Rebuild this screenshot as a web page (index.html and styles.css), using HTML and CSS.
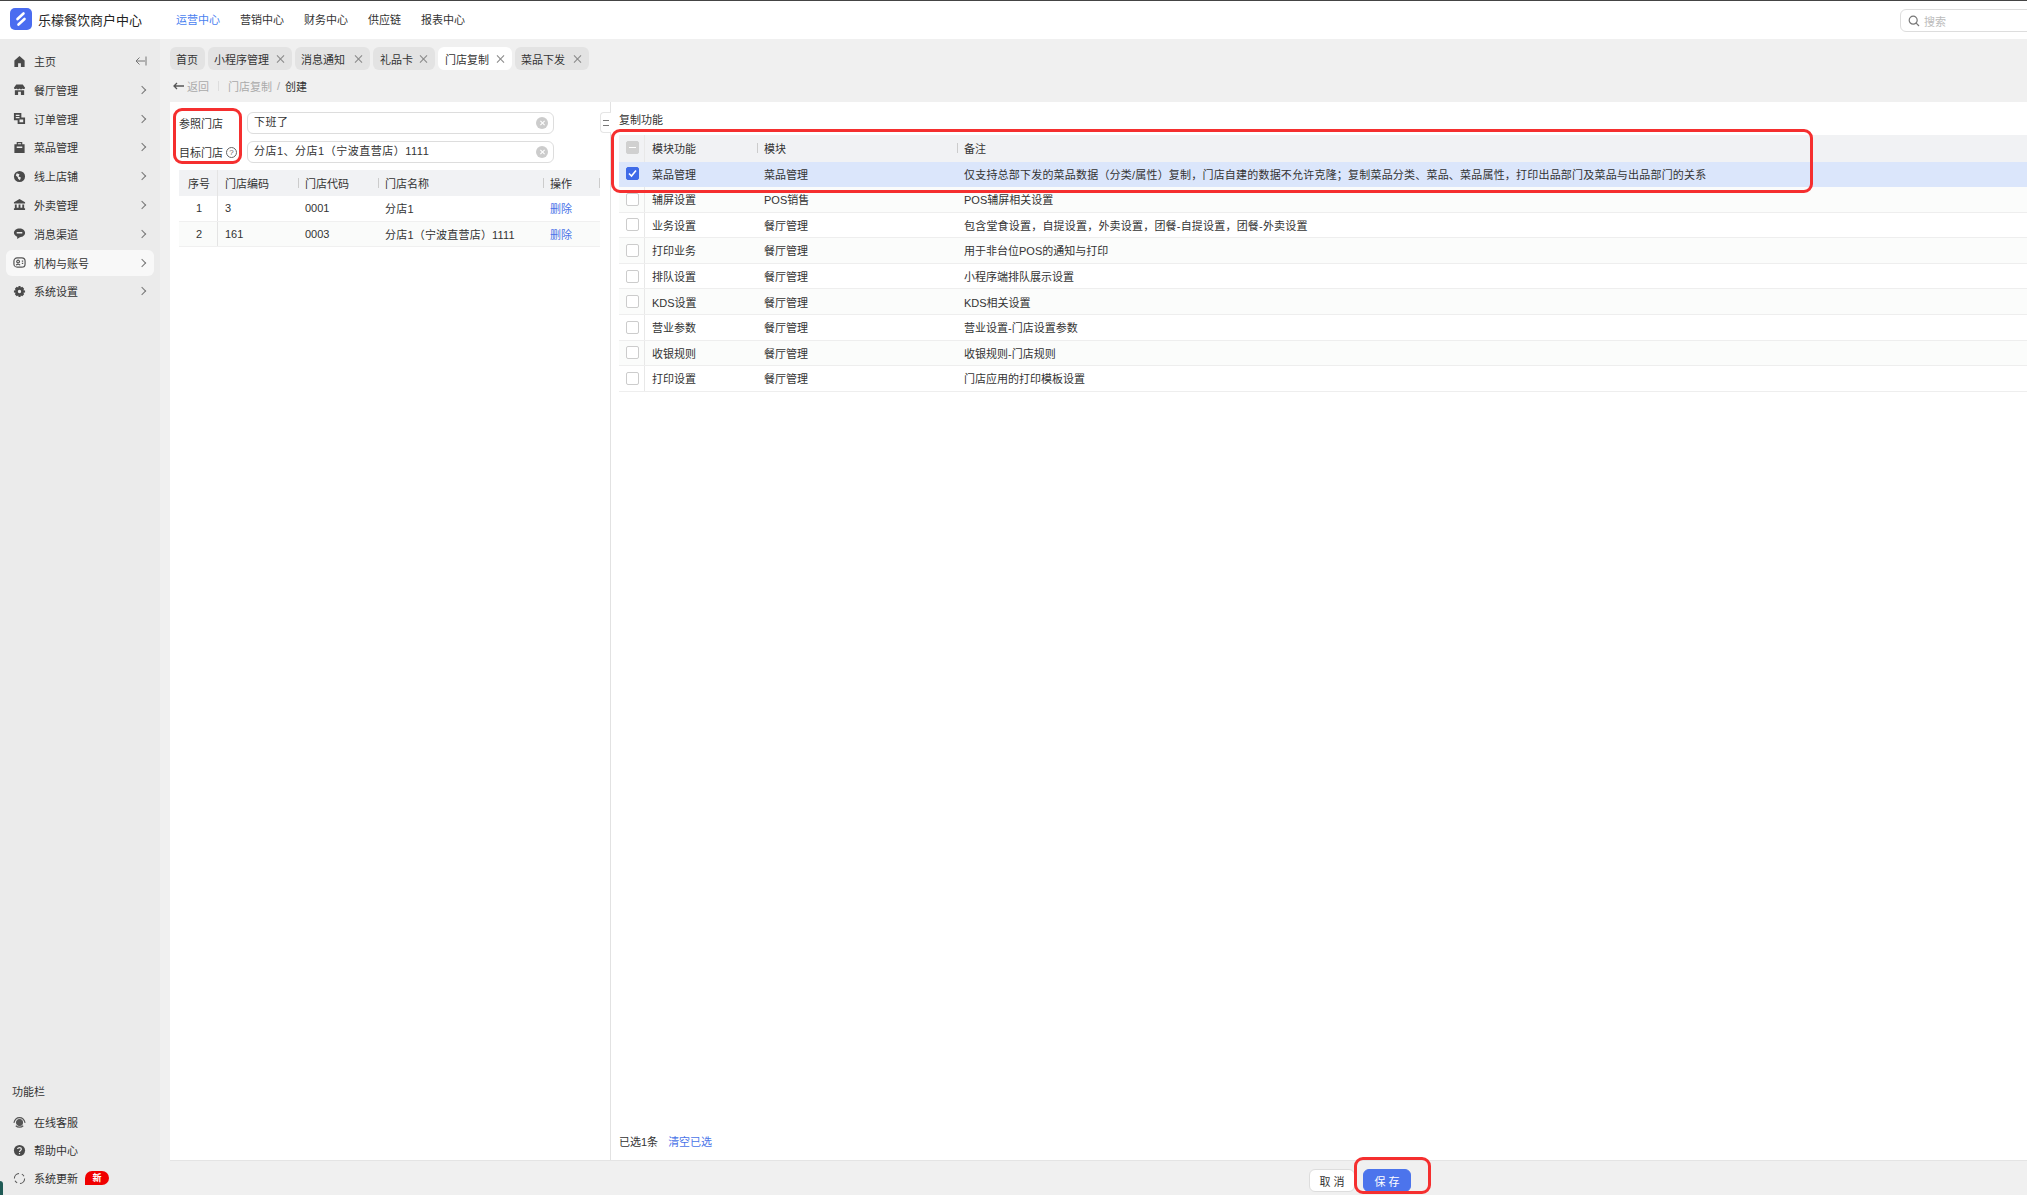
FILE: index.html
```html
<!DOCTYPE html>
<html lang="zh-CN">
<head>
  <meta charset="UTF-8">
  <title>门店复制</title>
  <link rel="stylesheet" href="styles.css">
</head>
<body>
<div class="page">

  <header class="topbar">
    <div class="logo">
      <span class="logo-mark">
        <svg width="16" height="16" viewBox="0 0 16 16" fill="none" stroke="#fff" stroke-width="2.6" stroke-linecap="round"><path d="M10.500 2.500 L4.500 8 M11.500 8 L5.500 13.500"/></svg>
      </span>
      <span class="logo-text">乐檬餐饮商户中心</span>
    </div>
    <nav class="topnav">
      <a class="on">运营中心</a>
      <a>营销中心</a>
      <a>财务中心</a>
      <a>供应链</a>
      <a>报表中心</a>
    </nav>
    <div class="search">
      <svg width="12" height="12" viewBox="0 0 12 12" fill="none" stroke="#777" stroke-width="1.2"><circle cx="5.2" cy="5.2" r="4"/><path d="M8.2 8.2 L11 11"/></svg>
      <span>搜索</span>
    </div>
  </header>

  <div class="body-row">
    <aside class="sidebar">
      <ul class="menu">
        <li class="menu-item">
          <svg class="ico" viewBox="0 0 14 14"><path d="M7 1 L12.500 6 L12.500 13 L8.500 13 L8.500 9 L5.500 9 L5.500 13 L1.500 13 L1.500 6 Z"/></svg>
          <span>主页</span>
          <svg class="collapse" width="12" height="10" viewBox="0 0 12 10" fill="none" stroke="#777" stroke-width="1"><path d="M11 0.500 L11 9.500 M10 5 L1 5 M4.500 1.500 L1 5 L4.500 8.500"/></svg>
        </li>
        <li class="menu-item">
          <svg class="ico" viewBox="0 0 14 14"><path d="M3.500 1.500 L10.500 1.500 L13 5 C13 6.500 11 7 10.200 5.800 C9.500 7 7.800 7 7 5.800 C6.200 7 4.500 7 3.800 5.800 C3 7 1 6.500 1 5 Z M2 7.800 L12 7.800 L12 13 L8.500 13 L8.500 9.500 L5.500 9.500 L5.500 13 L2 13 Z"/></svg>
          <span>餐厅管理</span><i class="chev"></i>
        </li>
        <li class="menu-item">
          <svg class="ico" viewBox="0 0 14 14"><path d="M1 1 L9 1 L9 6 L13 6 L13 13 L5 13 L5 9 L1 9 Z M3 3 L3 4.200 L7 4.200 L7 3 Z M3 5.500 L3 6.700 L7 6.700 L7 5.500 Z M7 8 L7 11 L11 11 L11 8 Z" fill-rule="evenodd"/></svg>
          <span>订单管理</span><i class="chev"></i>
        </li>
        <li class="menu-item">
          <svg class="ico" viewBox="0 0 14 14"><path d="M1.500 3.500 L4 3.500 L4 1 L10 1 L10 3.500 L12.500 3.500 L12.500 13 L1.500 13 Z M5.300 2.300 L5.300 3.500 L8.700 3.500 L8.700 2.300 Z M4 6 L4 7.500 L10 7.500 L10 6 Z" fill-rule="evenodd"/></svg>
          <span>菜品管理</span><i class="chev"></i>
        </li>
        <li class="menu-item">
          <svg class="ico" viewBox="0 0 14 14"><path d="M7 1 A6 6 0 1 0 7 13 A6 6 0 1 0 7 1 Z M4 3.500 L7 4.500 L6 7 L8.500 8 L7.500 11 L5.500 9.500 L5 7.500 L3 6 Z" fill-rule="evenodd"/></svg>
          <span>线上店铺</span><i class="chev"></i>
        </li>
        <li class="menu-item">
          <svg class="ico" viewBox="0 0 14 14"><path d="M7 1 L13 4.500 L13 6 L1 6 L1 4.500 Z M2 7 L4 7 L4 10.500 L6 10.500 L6 7 L8 7 L8 10.500 L10 10.500 L10 7 L12 7 L12 11 L13 11 L13 13 L1 13 L1 11 L2 11 Z"/></svg>
          <span>外卖管理</span><i class="chev"></i>
        </li>
        <li class="menu-item">
          <svg class="ico" viewBox="0 0 14 14"><path d="M7 1.500 C10.500 1.500 13 3.500 13 6.300 C13 9 10.500 11 7.500 11 L4.500 13 L4.500 10.500 C2.500 9.700 1 8.200 1 6.300 C1 3.500 3.500 1.500 7 1.500 Z M4 5.500 L4 7 L10 7 L10 5.500 Z" fill-rule="evenodd"/></svg>
          <span>消息渠道</span><i class="chev"></i>
        </li>
        <li class="menu-item active">
          <svg class="ico" viewBox="0 0 14 14" fill="none" stroke="#555" stroke-width="1.300"><rect x="1" y="2" width="12" height="10" rx="3.500"/><circle cx="5.500" cy="6" r="1.500"/><path d="M3.500 10 C4 8.500 7 8.500 7.500 10 M9.500 5.500 L11 5.500 M9.500 8 L11 8"/></svg>
          <span>机构与账号</span><i class="chev"></i>
        </li>
        <li class="menu-item">
          <svg class="ico" viewBox="0 0 14 14"><path d="M6 1 L8 1 L8.400 2.800 L10 2 L12 4 L11.200 5.600 L13 6 L13 8 L11.200 8.400 L12 10 L10 12 L8.400 11.200 L8 13 L6 13 L5.600 11.200 L4 12 L2 10 L2.800 8.400 L1 8 L1 6 L2.800 5.600 L2 4 L4 2 L5.600 2.800 Z M7 5.200 A1.800 1.800 0 1 0 7 8.800 A1.800 1.800 0 1 0 7 5.200 Z" fill-rule="evenodd"/></svg>
          <span>系统设置</span><i class="chev"></i>
        </li>
      </ul>

      <div class="side-foot">
        <div class="side-title">功能栏</div>
        <div class="foot-item">
          <svg class="ico" viewBox="0 0 14 14" fill="none" stroke="#555" stroke-width="1.200"><path d="M1 7.500 C2 3 4.500 1.800 7 1.800 C9.500 1.800 12 3 13 7.500"/><circle cx="7" cy="7" r="3.200" fill="#555"/><path d="M3 10.500 C5 12.500 9 12.500 11 10.500"/></svg>
          <span>在线客服</span>
        </div>
        <div class="foot-item">
          <svg class="ico" viewBox="0 0 14 14"><circle cx="7" cy="7" r="6"/><path d="M5 5.500 C5 3.500 9 3.500 9 5.500 C9 7 7 6.800 7 8.500 M7 9.800 L7 11" fill="none" stroke="#ebebeb" stroke-width="1.300"/></svg>
          <span>帮助中心</span>
        </div>
        <div class="foot-item">
          <svg class="ico" viewBox="0 0 14 14" fill="none" stroke="#555" stroke-width="1.100"><path d="M1.500 7 A5.500 5.500 0 0 1 6.500 1.500 M12.500 7 A5.500 5.500 0 0 1 7.500 12.500 M9.500 2.300 A5.500 5.500 0 0 1 11.800 4.500 M4.500 11.700 A5.500 5.500 0 0 1 2.200 9.500"/></svg>
          <span>系统更新</span>
          <b class="badge">新</b>
        </div>
      </div>
      <i class="corner"></i>
    </aside>

    <main class="main">
      <div class="tabs">
        <div class="tab plain">首页</div>
        <div class="tab">小程序管理<i class="x"></i></div>
        <div class="tab">消息通知<i class="x"></i></div>
        <div class="tab">礼品卡<i class="x"></i></div>
        <div class="tab on">门店复制<i class="x"></i></div>
        <div class="tab">菜品下发<i class="x"></i></div>
      </div>

      <div class="crumbs">
        <svg width="11" height="8" viewBox="0 0 11 8" fill="none" stroke="#555" stroke-width="1.300"><path d="M11 4 L1 4 M4 1 L1 4 L4 7"/></svg>
        <span class="back">返回</span>
        <i class="crumb-sep"></i>
        <span class="muted">门店复制</span>
        <span class="muted slash">/</span>
        <span>创建</span>
      </div>

      <div class="panel">
        <section class="left">
          <div class="form-row">
            <label>参照门店</label>
            <div class="field">下班了<i class="clear"></i></div>
          </div>
          <div class="form-row">
            <label>目标门店<i class="help">?</i></label>
            <div class="field">分店1、分店1（宁波直营店）1111<i class="clear"></i></div>
          </div>

          <div class="store-table">
            <div class="st-row st-head">
              <div class="num">序号</div>
              <div>门店编码</div>
              <div class="sep">门店代码</div>
              <div class="sep">门店名称</div>
              <div class="sep end">操作</div>
            </div>
            <div class="st-row">
              <div class="num">1</div>
              <div>3</div>
              <div>0001</div>
              <div class="wide">分店1</div>
              <div><a class="link">删除</a></div>
            </div>
            <div class="st-row alt">
              <div class="num">2</div>
              <div>161</div>
              <div>0003</div>
              <div class="wide">分店1（宁波直营店）1111</div>
              <div><a class="link">删除</a></div>
            </div>
          </div>
        </section>

        <section class="right">
          <button class="fold"><i></i></button>
          <h3>复制功能</h3>
          <div class="fn-table">
            <div class="fn-row fn-head">
              <div class="chk-cell"><i class="chk mixed"></i></div>
              <div>模块功能</div>
              <div class="sep">模块</div>
              <div class="sep">备注</div>
            </div>
            <div class="fn-row picked">
              <div class="chk-cell"><i class="chk checked"><svg width="11" height="11" viewBox="0 0 11 11" fill="none" stroke="#fff" stroke-width="1.600"><path d="M2 5.500 L4.500 8 L9 2.500"/></svg></i></div>
              <div>菜品管理</div>
              <div>菜品管理</div>
              <div class="wide">仅支持总部下发的菜品数据（分类/属性）复制，门店自建的数据不允许克隆；复制菜品分类、菜品、菜品属性，打印出品部门及菜品与出品部门的关系</div>
            </div>
            <div class="fn-row alt">
              <div class="chk-cell"><i class="chk"></i></div>
              <div>辅屏设置</div>
              <div>POS销售</div>
              <div>POS辅屏相关设置</div>
            </div>
            <div class="fn-row">
              <div class="chk-cell"><i class="chk"></i></div>
              <div>业务设置</div>
              <div>餐厅管理</div>
              <div class="wide">包含堂食设置，自提设置，外卖设置，团餐-自提设置，团餐-外卖设置</div>
            </div>
            <div class="fn-row alt">
              <div class="chk-cell"><i class="chk"></i></div>
              <div>打印业务</div>
              <div>餐厅管理</div>
              <div>用于非台位POS的通知与打印</div>
            </div>
            <div class="fn-row">
              <div class="chk-cell"><i class="chk"></i></div>
              <div>排队设置</div>
              <div>餐厅管理</div>
              <div>小程序端排队展示设置</div>
            </div>
            <div class="fn-row alt">
              <div class="chk-cell"><i class="chk"></i></div>
              <div>KDS设置</div>
              <div>餐厅管理</div>
              <div>KDS相关设置</div>
            </div>
            <div class="fn-row">
              <div class="chk-cell"><i class="chk"></i></div>
              <div>营业参数</div>
              <div>餐厅管理</div>
              <div>营业设置-门店设置参数</div>
            </div>
            <div class="fn-row alt">
              <div class="chk-cell"><i class="chk"></i></div>
              <div>收银规则</div>
              <div>餐厅管理</div>
              <div>收银规则-门店规则</div>
            </div>
            <div class="fn-row">
              <div class="chk-cell"><i class="chk"></i></div>
              <div>打印设置</div>
              <div>餐厅管理</div>
              <div>门店应用的打印模板设置</div>
            </div>
          </div>
          <div class="picked-info">
            <span>已选1条</span>
            <a class="link">清空已选</a>
          </div>
        </section>
      </div>

      <footer class="actions">
        <button class="btn">取 消</button>
        <button class="btn primary">保 存</button>
      </footer>
    </main>
  </div>

  <!-- red marks drawn over the screenshot -->
  <i class="mark mark-form"></i>
  <i class="mark mark-table"></i>
  <i class="mark mark-save"></i>
</div>
</body>
</html>
```

FILE: styles.css
```css
* {
  box-sizing: border-box;
}
html, body {
  margin: 0;
  height: 100%;
  overflow: hidden;
}
body {
  font-family: "Liberation Sans", "Noto Sans CJK SC", sans-serif;
  font-size: 11px;
  color: #333;
  background: #f0f0f0;
}
i {
  font-style: normal;
}
.page {
  position: relative;
  width: 2027px;
  height: 1195px;
  display: flex;
  flex-direction: column;
  overflow: hidden;
}

/* top bar */
.topbar {
  flex: 0 0 39px;
  display: flex;
  align-items: center;
  background: #fff;
  border-top: 1px solid #444;
  padding: 0 0 2px 10px;
  position: relative;
}
.logo {
  display: flex;
  align-items: center;
  width: 166px;
}
.logo-mark {
  width: 22px;
  height: 22px;
  border-radius: 5px;
  background: #4a6cf0;
  display: flex;
  align-items: center;
  justify-content: center;
}
.logo-text {
  margin-left: 6px;
  font-size: 13px;
  color: #222;
}
.topnav {
  display: flex;
  gap: 20px;
}
.topnav a {
  color: #333;
}
.topnav a.on {
  color: #4a7ff0;
}
.search {
  position: absolute;
  left: 1900px;
  top: 8px;
  width: 160px;
  height: 23px;
  border: 1px solid #ddd;
  border-radius: 6px;
  display: flex;
  align-items: center;
  gap: 4px;
  padding-left: 7px;
  color: #bbb;
}

.body-row {
  flex: 1;
  display: flex;
  min-height: 0;
}

/* sidebar */
.sidebar {
  flex: 0 0 160px;
  background: #ebebeb;
  display: flex;
  flex-direction: column;
  justify-content: space-between;
  padding: 9px 6px 3px;
  position: relative;
}
.menu {
  list-style: none;
  margin: 0;
  padding: 0;
  display: flex;
  flex-direction: column;
  gap: 2.8px;
}
.menu-item {
  height: 26px;
  display: flex;
  align-items: center;
  padding: 0 7px;
  border-radius: 6px;
  position: relative;
}
.menu-item.active {
  background: #f8f8f8;
}
.ico {
  width: 13px;
  height: 13px;
  margin-right: 8px;
  fill: #4a4a4a;
  flex: none;
}
.ico[fill="none"] {
  fill: none;
}
.collapse {
  position: absolute;
  right: 7px;
  top: 8px;
}
.chev {
  position: absolute;
  right: 9px;
  top: 10px;
  width: 6px;
  height: 6px;
  border-top: 1px solid #777;
  border-right: 1px solid #777;
  transform: rotate(45deg);
}
.side-title {
  padding-left: 6px;
  height: 18px;
  line-height: 18px;
  margin-bottom: 7px;
}
.foot-item {
  height: 28px;
  display: flex;
  align-items: center;
  padding-left: 7px;
}
.badge {
  margin-left: 7px;
  width: 24px;
  height: 14px;
  line-height: 14px;
  text-align: center;
  border-radius: 7px 7px 7px 0;
  background: #f00000;
  color: #fff;
  font-size: 9px;
}
.corner {
  position: absolute;
  left: 0;
  bottom: 0;
  width: 3px;
  height: 14px;
  background: #1f5a55;
  border-top-right-radius: 3px;
}

/* main column */
.main {
  flex: 1;
  display: flex;
  flex-direction: column;
  min-width: 0;
}
.tabs {
  flex: 0 0 23px;
  margin-top: 8px;
  padding-left: 10px;
  display: flex;
  gap: 3px;
}
.tab {
  height: 23px;
  padding: 0 6px;
  display: flex;
  align-items: center;
  justify-content: space-between;
  width: 74px;
  background: #e3e3e3;
  border-radius: 6px;
}
.tab:nth-child(2) {
  width: 84px;
}
.tab:nth-child(3) {
  width: 75px;
}
.tab:nth-child(4) {
  width: 62px;
  padding-left: 7px;
}
.tab:nth-child(5) {
  padding-left: 7px;
}
.tab.plain {
  width: 35px;
}
.tab.on {
  background: #fff;
}
.x {
  position: relative;
  width: 8px;
  height: 8px;
  margin-right: 2px;
}
.x::before, .x::after {
  content: "";
  position: absolute;
  left: 3.500px;
  top: -1px;
  width: 1px;
  height: 10px;
  background: #888;
  transform: rotate(45deg);
}
.x::after {
  transform: rotate(-45deg);
}
.crumbs {
  flex: 0 0 32px;
  display: flex;
  align-items: center;
  padding-left: 13px;
}
.back {
  margin-left: 3px;
  color: #aaa;
}
.crumb-sep {
  width: 1px;
  height: 10px;
  background: #ddd;
  margin: 0 9px;
}
.muted {
  color: #aaa;
}
.slash {
  margin: 0 5px;
}

/* panel */
.panel {
  flex: 1;
  display: flex;
  margin-left: 10px;
  background: #fff;
  min-height: 0;
}
.left {
  flex: 0 0 441px;
  padding: 10px 0 0 9px;
  border-right: 1px solid #e2e2e2;
}
.form-row {
  display: flex;
  align-items: center;
  height: 22px;
  margin-bottom: 7px;
}
.form-row label {
  width: 68px;
  display: flex;
  align-items: center;
}
.help {
  width: 11px;
  height: 11px;
  margin-left: 3px;
  border: 1px solid #666;
  border-radius: 50%;
  font-size: 8px;
  line-height: 9px;
  text-align: center;
  color: #666;
}
.field {
  width: 307px;
  height: 22px;
  border: 1px solid #ddd;
  border-radius: 6px;
  padding-left: 6px;
  line-height: 19px;
  letter-spacing: 0.5px;
  position: relative;
}
.clear {
  position: absolute;
  right: 5px;
  top: 4px;
  width: 12px;
  height: 12px;
  border-radius: 50%;
  background: #ccc;
}
.clear::before, .clear::after {
  content: "";
  position: absolute;
  left: 5.500px;
  top: 3px;
  width: 1px;
  height: 6px;
  background: #fff;
  transform: rotate(45deg);
}
.clear::after {
  transform: rotate(-45deg);
}
.store-table {
  width: 421px;
}
.st-row {
  display: grid;
  grid-template-columns: 39px 80px 80px 165px 57px;
  height: 25.500px;
  align-items: center;
  border-bottom: 1px solid #f0f0f0;
}
.st-row > div {
  padding-left: 7px;
  height: 100%;
  display: flex;
  align-items: center;
  position: relative;
}
.st-row > .num {
  padding-left: 2px;
  justify-content: center;
  border-right: 1px solid #e4e4e4;
}
.st-head {
  height: 26px;
  background: #f1f2f4;
  border-bottom: 0;
}
.st-head > div {
  padding-bottom: 1px;
}
.st-row.alt {
  background: #fafbfa;
}
.wide {
  letter-spacing: 0.2px;
}
.sep::before {
  content: "";
  position: absolute;
  left: 0;
  top: 8px;
  width: 1px;
  height: 10px;
  background: #ccc;
}
.sep.end::after {
  content: "";
  position: absolute;
  right: 0;
  top: 8px;
  width: 1px;
  height: 10px;
  background: #ccc;
}
.link {
  color: #4a74e8;
}

/* right side */
.right {
  flex: 1;
  min-width: 0;
  padding-left: 8px;
  position: relative;
  display: flex;
  flex-direction: column;
}
.fold {
  position: absolute;
  left: -11px;
  top: 10px;
  width: 11px;
  height: 21px;
  padding: 0;
  background: #fff;
  border: 1px solid #e5e5e5;
  border-right: 0;
  border-radius: 4px 0 0 4px;
}
.fold i {
  display: block;
  width: 6px;
  height: 6px;
  margin: 0 auto;
  border-top: 1px solid #777;
  border-bottom: 1px solid #777;
}
.right h3 {
  margin: 0;
  height: 33px;
  padding-top: 10px;
  font-size: 11px;
  font-weight: 400;
  line-height: 16px;
}
.fn-row {
  display: grid;
  grid-template-columns: 26px 112px 200px 1fr;
  height: 25.600px;
  border-bottom: 1px solid #eee;
}
.fn-row > div {
  padding-left: 7px;
  display: flex;
  align-items: center;
  position: relative;
}
.fn-row > .chk-cell {
  padding-left: 7px;
  border-right: 1px solid #e8e8e8;
}
.fn-head {
  height: 27px;
  background: #f1f2f4;
  border-bottom: 0;
}
.fn-head > div {
  padding-bottom: 2px;
}
.fn-row.alt {
  background: #fbfcfb;
}
.fn-row.picked {
  height: 25px;
  background: #dbe6fb;
  border-bottom: 0;
}
.picked > div {
  padding-bottom: 2px;
}
.picked .chk-cell {
  border-right: 0;
}
.chk {
  width: 13px;
  height: 13px;
  display: flex;
  align-items: center;
  justify-content: center;
  background: #fff;
  border: 1px solid #ccc;
  border-radius: 2px;
}
.chk.mixed {
  background: #d0d0d0;
  border-color: #d0d0d0;
}
.chk.mixed::before {
  content: "";
  width: 7px;
  height: 1px;
  background: #fff;
}
.chk.checked {
  background: #3f6be8;
  border-color: #3f6be8;
}
.picked-info {
  margin-top: auto;
  height: 27px;
  display: flex;
  gap: 10px;
  align-items: flex-start;
}

/* bottom buttons */
.actions {
  flex: 0 0 35px;
  display: flex;
  gap: 8px;
  margin-left: 10px;
  padding: 8px 0 0 1139px;
  border-top: 1px solid #e4e4e4;
}
.btn {
  width: 46px;
  height: 23px;
  padding: 0;
  font: inherit;
  color: #333;
  background: #fff;
  border: 1px solid #ddd;
  border-radius: 6px;
}
.btn.primary {
  width: 48px;
  background: #4c74ec;
  border-color: #4c74ec;
  color: #fff;
}

/* red marks */
.mark {
  position: absolute;
  border: 3px solid #f52f2f;
  border-radius: 9px;
  pointer-events: none;
}
.mark-form {
  left: 173px;
  top: 108px;
  width: 69px;
  height: 56px;
}
.mark-table {
  left: 611px;
  top: 129px;
  width: 1202px;
  height: 64px;
}
.mark-save {
  left: 1354px;
  top: 1157px;
  width: 77px;
  height: 37px;
}
```
